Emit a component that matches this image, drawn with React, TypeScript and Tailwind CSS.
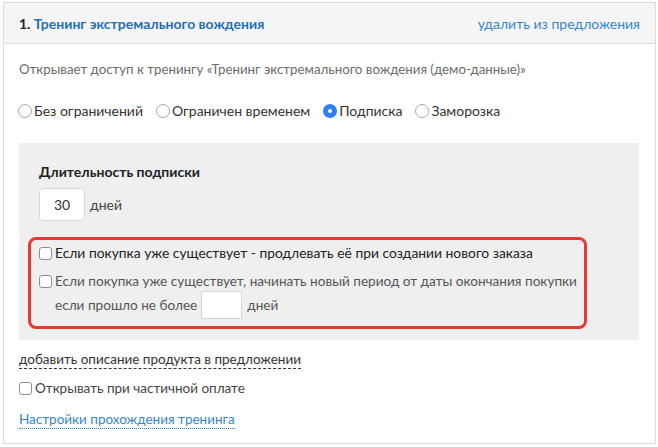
const FONT = { fontFamily: 'Lato, "Open Sans", Arial, sans-serif' }

const RADIOS = [
  { id: 'none', label: 'Без ограничений' },
  { id: 'time', label: 'Ограничен временем' },
  { id: 'sub', label: 'Подписка' },
  { id: 'freeze', label: 'Заморозка' },
]

function Radio({ checked }: { checked?: boolean }) {
  if (checked) {
    return (
      <span className="w-[14px] h-[14px] rounded-full bg-[#2f7ff5] flex items-center justify-center shrink-0">
        <span className="w-[4px] h-[4px] rounded-full bg-white" />
      </span>
    )
  }
  return <span className="w-[14px] h-[14px] rounded-full border border-[#a9a9a9] bg-white shrink-0" />
}

function Check() {
  return <span className="w-[13px] h-[13px] rounded-[3px] border border-[#8f8f8f] bg-white shrink-0" />
}

export default function App() {
  return (
    <div className="w-[658px] h-[447px] bg-white pt-[2px] pl-[3px]" style={FONT}>
      <div className="w-[653px] h-[442px] border border-[#dcdcdc] bg-white">
        {/* Header */}
        <div className="h-[41px] bg-[#f5f5f5] border-b border-[#dedede] flex items-center justify-between pl-[15px] pr-[15px]">
          <div className="text-[14px] font-bold">
            <span className="text-[#222]">1. </span>
            <span className="text-[#1f70b6]">Тренинг экстремального вождения</span>
          </div>
          <span className="text-[14px] text-[#3487cc]">удалить из предложения</span>
        </div>

        <div className="pl-[15px] pr-[16px]">
          <div className="text-[13.3px] text-[#6b6b6b] mt-[16px] leading-[18px]">
            Открывает доступ к тренингу «Тренинг экстремального вождения (демо-данные)»
          </div>

          {/* Radios */}
          <div className="flex items-center mt-[24px] text-[14px] text-[#333] leading-[18px] -ml-[1px]">
            {RADIOS.map(r => (
              <div key={r.id} className="flex items-center gap-[2px] mr-[13px]">
                <Radio checked={r.id === 'sub'} />
                <span>{r.label}</span>
              </div>
            ))}
          </div>

          {/* Subscription box */}
          <div className="bg-[#efefef] mt-[23px] pt-[20px] pb-[11px] pl-[20px] pr-[20px]">
            <div className="text-[14px] font-bold text-[#222] leading-[18px]">Длительность подписки</div>
            <div className="flex items-center mt-[7px]">
              <div className="w-[46px] h-[33px] bg-white border border-[#d6d6d6] rounded-[4px] flex items-center justify-center text-[14px] text-[#333]">
                30
              </div>
              <span className="ml-[5px] text-[14px] text-[#444]">дней</span>
            </div>

            <div className="mt-[16px] -ml-[11px] w-[559px] border-[3px] border-[#e53a30] rounded-[8px] pl-[8px] pt-[4px] pb-[7px] leading-[18px]">
              <div className="flex items-center gap-[3px] text-[#222] text-[13.85px]">
                <Check />
                <span>Если покупка уже существует - продлевать её при создании нового заказа</span>
              </div>
              <div className="flex items-center gap-[3px] text-[#555] mt-[10px] text-[13.6px]">
                <Check />
                <span>Если покупка уже существует, начинать новый период от даты окончания покупки</span>
              </div>
              <div className="flex items-center text-[#555] pl-[16px] mt-[1px] text-[13.6px]">
                <span>если прошло не более</span>
                <span className="ml-[4px] w-[41px] h-[28px] bg-white border border-[#d6d6d6]" />
                <span className="ml-[5px]">дней</span>
              </div>
            </div>
          </div>

          <div className="mt-[6px]">
            <span className="text-[13.5px] text-[#333] border-b border-dashed border-[#333] leading-[20px] pb-[1px]">
              добавить описание продукта в предложении
            </span>
          </div>

          <div className="flex items-center gap-[3px] mt-[9px] text-[13.5px] text-[#444] leading-[18px]">
            <Check />
            <span>Открывать при частичной оплате</span>
          </div>

          <div className="mt-[9px]">
            <span className="text-[13.5px] text-[#3487cc] border-b border-dotted border-[#3487cc] leading-[20px] pb-[1px]">
              Настройки прохождения тренинга
            </span>
          </div>
        </div>
      </div>
    </div>
  )
}
